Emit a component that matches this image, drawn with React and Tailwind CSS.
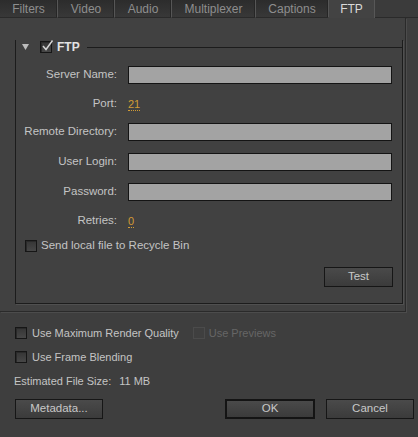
import React from 'react';

const tabs = [
  { name: 'Filters', w: 'w-[58px]' },
  { name: 'Video', w: 'w-[57px]' },
  { name: 'Audio', w: 'w-[57px]' },
  { name: 'Multiplexer', w: 'w-[84px]' },
  { name: 'Captions', w: 'w-[73px]' },
];

function CheckBox({ checked, disabled }) {
  return (
    <span
      className={`relative block w-[12px] h-[12px] shrink-0 border ${
        disabled
          ? 'border-[#4b4b4b] bg-[#3f3f3f]'
          : 'border-[#161616] bg-linear-to-b from-[#353535] to-[#474747] shadow-[inset_1px_1px_0_#2a2a2a]'
      }`}
    >
      {checked && (
        <svg className="absolute -top-[3px] left-[0px]" width="13" height="13" viewBox="0 0 13 13">
          <path d="M2 7 L5 10.5 L11.5 1.5" fill="none" stroke="#d4d4d4" strokeWidth="1.5" />
        </svg>
      )}
    </span>
  );
}

function Field({ label, mt }) {
  return (
    <div className={`flex items-center h-[18px] ${mt}`}>
      <span className="w-[101px] text-right text-[#c4c4c4] text-[11.5px]">{label}</span>
      <div className="ml-[11px] w-[264px] h-[18px] bg-[#a3a3a3] border border-[#141414]" />
    </div>
  );
}

function HotNumber({ label, value, mt }) {
  return (
    <div className={`flex items-center h-[18px] ${mt}`}>
      <span className="w-[101px] text-right text-[#c4c4c4] text-[11.5px]">{label}</span>
      <span className="ml-[11px] text-[#d19b35] border-b border-dotted border-[#d19b35] leading-[12px]">
        {value}
      </span>
    </div>
  );
}

function Button({ children, w, isDefault }) {
  return (
    <button
      className={`${w} h-[20px] flex items-center justify-center text-[#c8c8c8] text-[11.5px] bg-linear-to-b from-[#4a4a4a] to-[#3b3b3b] ${
        isDefault ? 'border-2 border-[#141414]' : 'border border-[#161616]'
      }`}
    >
      {children}
    </button>
  );
}

export default function App() {
  return (
    <div className="w-[418px] h-[437px] overflow-hidden bg-[#3e3e3e] text-[11px] font-['Liberation_Sans',Arial,sans-serif] select-none">
      {/* Tabs */}
      <div className="flex h-[18px]">
        {tabs.map((t) => (
          <div
            key={t.name}
            className={`${t.w} h-full flex items-center justify-center text-[#8e8e8e] text-[12px] bg-linear-to-b from-[#2c2c2c] to-[#383838] border-r border-[#565656] border-b border-b-[#2a2a2a] shadow-[inset_-1px_0_0_#262626]`}
          >
            {t.name}
          </div>
        ))}
        <div className="w-[46px] h-full flex items-center justify-center text-[#dadada] text-[12px] bg-[#434343] border-r border-[#575757]">
          FTP
        </div>
        <div className="flex-1 h-full bg-[#3b3b3b] border-b border-[#2a2a2a]" />
      </div>

      {/* Tab panel */}
      <div className="w-[406px] bg-[#414141] border-r border-b border-[#2a2a2a] shadow-[1px_1px_0_#4c4c4c] pt-[29px] pb-[7px]">
        <div className="ml-[15px] w-[388px] border-l border-r border-b border-[#1c1c1c] shadow-[1px_1px_0_#505050]">
          {/* Header */}
          <div className="flex items-center h-[14px] -mt-[7px]">
            <svg className="ml-[6px]" width="7" height="6" viewBox="0 0 7 6">
              <polygon points="0,0 7,0 3.5,6" fill="#bcbcbc" />
            </svg>
            <span className="ml-[11px]">
              <CheckBox checked />
            </span>
            <span className="ml-[5px] font-bold text-[12px] text-[#e2e2e2]">FTP</span>
            <div className="ml-[7px] flex-1 border-t border-[#1c1c1c] mt-[1px]" />
          </div>

          <Field label="Server Name:" mt="mt-[12px]" />
          <HotNumber label="Port:" value="21" mt="mt-[11px]" />
          <Field label="Remote Directory:" mt="mt-[10px]" />
          <Field label="User Login:" mt="mt-[12px]" />
          <Field label="Password:" mt="mt-[12px]" />
          <HotNumber label="Retries:" value="0" mt="mt-[11px]" />

          <div className="flex items-center h-[18px] mt-[7px] ml-[9px]">
            <CheckBox />
            <span className="ml-[4px] text-[11.5px] text-[#c4c4c4]">Send local file to Recycle Bin</span>
          </div>

          <div className="flex justify-end pr-[9px] mt-[12px] pb-[16px]">
            <Button w="w-[69px]">Test</Button>
          </div>
        </div>
      </div>

      {/* Bottom options */}
      <div className="px-[15px] pt-[13px]">
        <div className="flex items-center h-[16px]">
          <CheckBox />
          <span className="ml-[5px] text-[11px] text-[#c4c4c4]">Use Maximum Render Quality</span>
          <span className="ml-[14px]">
            <CheckBox disabled />
          </span>
          <span className="ml-[4px] text-[11px] text-[#666666]">Use Previews</span>
        </div>
        <div className="flex items-center h-[16px] mt-[8px]">
          <CheckBox />
          <span className="ml-[5px] text-[11px] text-[#c4c4c4]">Use Frame Blending</span>
        </div>
        <div className="flex items-center h-[16px] mt-[8px] -ml-[1px] text-[11px] text-[#c4c4c4]">
          <span>Estimated File Size:</span>
          <span className="ml-[8px]">11 MB</span>
        </div>
        <div className="flex items-center mt-[10px]">
          <Button w="w-[88px]">Metadata...</Button>
          <div className="ml-auto flex gap-[11px] -mr-[11px]">
            <Button w="w-[90px]" isDefault>
              OK
            </Button>
            <Button w="w-[88px]">Cancel</Button>
          </div>
        </div>
      </div>
    </div>
  );
}
